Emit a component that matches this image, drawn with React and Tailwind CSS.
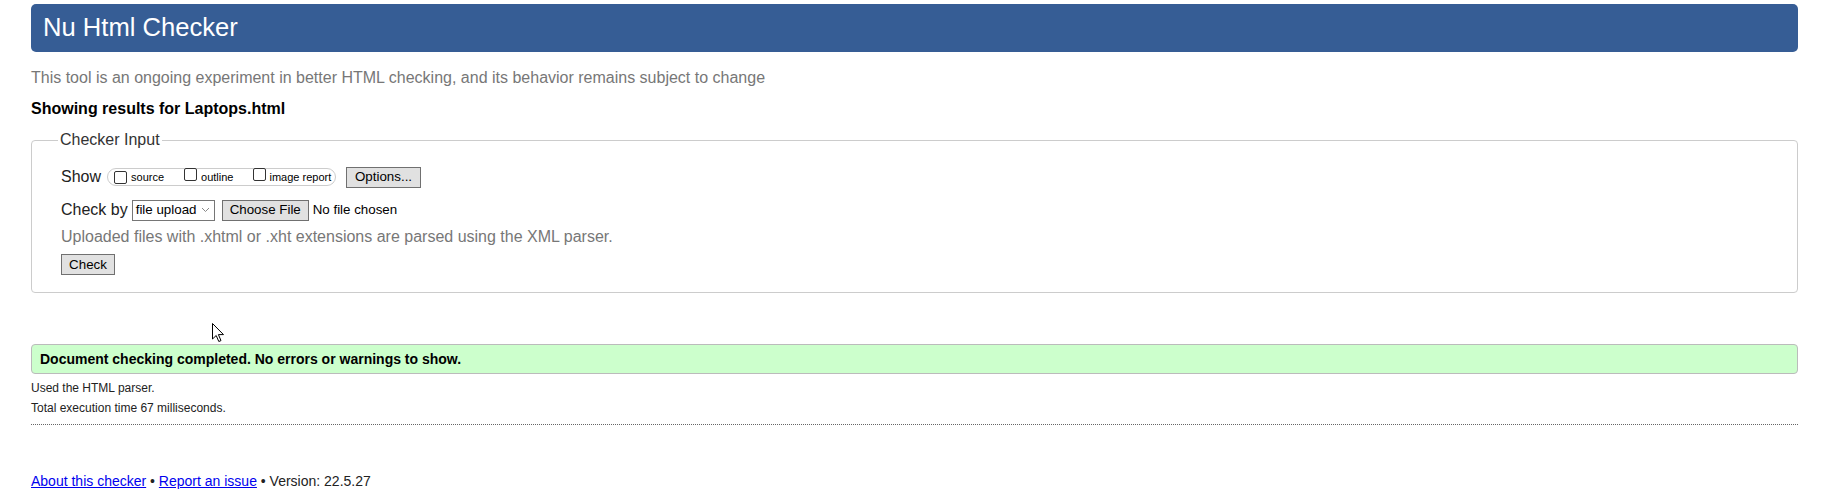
import React from "react";

function Box() {
  return <span className="inline-block w-[13px] h-[13px] border border-[#333] rounded-[2px] bg-white shrink-0" />;
}

function Btn({ children, className = "" }) {
  return (
    <span className={"inline-flex items-center justify-center h-[21px] border border-[#707070] bg-[#e1e1e1] text-[13.33px] text-black leading-none " + className}>
      {children}
    </span>
  );
}

export default function App() {
  return (
    <div className="relative min-h-[501px] bg-white pl-[31px] pr-[29px] pt-[4px] text-[#222]" style={{ fontFamily: '"Liberation Sans", Arial, sans-serif' }}>
      <div className="h-[48px] rounded-[5px] bg-[#365d95] flex items-center pl-[12px]">
        <h1 className="text-[25.6px] text-white leading-none font-normal">Nu Html Checker</h1>
      </div>

      <p className="mt-[17px] text-[16px] leading-[18px] text-[#777]">
        This tool is an ongoing experiment in better HTML checking, and its behavior remains subject to change
      </p>

      <p className="mt-[13px] text-[16px] leading-[18px] font-bold text-black">Showing results for Laptops.html</p>

      <fieldset className="mt-[13px] border border-[#ccc] rounded-[4px] pl-[29px] pr-[10px] pb-[17px]">
        <legend className="ml-[-3px] px-[2px] text-[16px] leading-[18px] text-[#333]">Checker Input</legend>

        <div className="mt-[17px] h-[22px] flex items-center">
          <span className="text-[16px] leading-[18px]">Show</span>
          <span className="ml-[6px] h-[18px] w-[229px] border border-[#ccc] rounded-full flex items-center pl-[6px] text-[11px] text-black">
            <Box />
            <span className="ml-[4px]">source</span>
            <span className="ml-[20px]"><Box /></span>
            <span className="ml-[4px]">outline</span>
            <span className="ml-[20px]"><Box /></span>
            <span className="ml-[3px]">image report</span>
          </span>
          <Btn className="ml-[10px] w-[75px]">Options...</Btn>
        </div>

        <div className="mt-[11px] h-[22px] flex items-center">
          <span className="text-[16px] leading-[18px]">Check by</span>
          <span className="ml-[4px] h-[21px] w-[83px] border border-[#767676] bg-white flex items-center pl-[3px] text-[13.33px] text-black">
            file upload
            <svg className="ml-[5px]" width="9" height="6" viewBox="0 0 9 6">
              <path d="M1 1 L4.5 4.5 L8 1" stroke="#888" strokeWidth="1" fill="none" />
            </svg>
          </span>
          <Btn className="ml-[7px] w-[87px]">Choose File</Btn>
          <span className="ml-[4px] text-[13.33px] text-black">No file chosen</span>
        </div>

        <p className="mt-[7px] text-[16px] leading-[18px] text-[#777]">
          Uploaded files with .xhtml or .xht extensions are parsed using the XML parser.
        </p>

        <div className="mt-[8px] flex">
          <Btn className="w-[54px]">Check</Btn>
        </div>
      </fieldset>

      <div className="mt-[51px] h-[30px] border border-[#bbb] rounded-[4px] bg-[#ccffcc] pl-[8px] pt-[6px]">
        <p className="text-[14px] leading-[16px] font-bold text-black">Document checking completed. No errors or warnings to show.</p>
      </div>

      <p className="mt-[7px] text-[12px] leading-[14px] text-[#222]">Used the HTML parser.</p>
      <p className="mt-[6px] text-[12px] leading-[14px] text-[#222]">Total execution time 67 milliseconds.</p>

      <div className="mt-[9px] border-t border-dotted border-[#666]" />

      <p className="mt-[48px] text-[14px] leading-[16px] text-[#222]">
        <a href="#" className="text-[#0000ee] underline">About this checker</a>
        {" \u2022 "}
        <a href="#" className="text-[#0000ee] underline">Report an issue</a>
        {" \u2022 Version: 22.5.27"}
      </p>

      <svg className="absolute left-[212px] top-[323px]" width="13" height="20" viewBox="0 0 13 20">
        <path d="M0.5 0.5 L0.5 16 L4.2 12.5 L6.8 18.5 L9 17.6 L6.4 11.6 L11.5 11.6 Z" fill="#fff" stroke="#000" strokeWidth="1" strokeLinejoin="miter" />
      </svg>
    </div>
  );
}
